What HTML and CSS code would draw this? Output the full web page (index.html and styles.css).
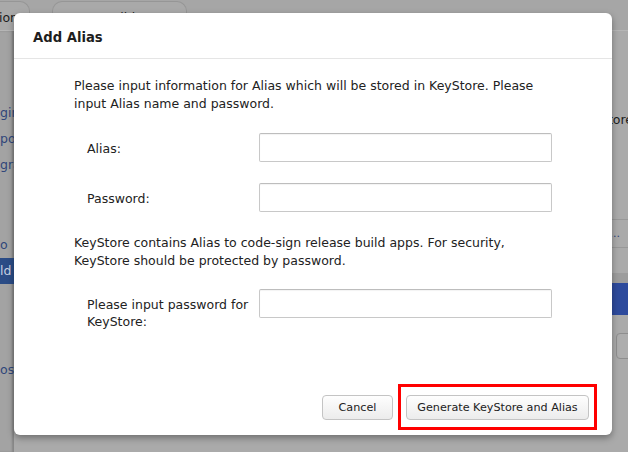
FILE: index.html
```html
<!DOCTYPE html>
<html>
<head>
<meta charset="utf-8">
<title>Add Alias</title>
<link rel="stylesheet" href="styles.css">
</head>
<body>
<div class="app">
  <div class="tabbar">
    <div class="tab tab-first">Configuration</div>
    <div class="tab tab-build">Build</div>
  </div>
  <div class="workspace">
    <nav class="sidebar">
      <div class="side-item first">gin</div>
      <div class="side-item">pos</div>
      <div class="side-item">gra</div>
      <div class="side-item gap1">o</div>
      <div class="side-item selected">ld</div>
      <div class="side-item gap2">os</div>
    </nav>
    <main class="content">
      <div class="content-title">KeyStore</div>
      <div class="content-row"><span class="dots">...</span></div>
      <div class="band-gray"></div>
      <div class="band-blue"></div>
      <div class="ghost-btn"></div>
    </main>
  </div>
</div>

<div class="modal">
  <div class="modal-header">Add Alias</div>
  <div class="modal-body">
    <p class="desc">Please input information for Alias which will be stored in KeyStore. Please input Alias name and password.</p>
    <div class="form-row">
      <label class="form-label">Alias:</label>
      <input class="form-input" type="text">
    </div>
    <div class="form-row">
      <label class="form-label">Password:</label>
      <input class="form-input" type="password">
    </div>
    <p class="desc desc-second">KeyStore contains Alias to code-sign release build apps. For security, KeyStore should be protected by password.</p>
    <div class="form-row">
      <label class="form-label">Please input password for KeyStore:</label>
      <input class="form-input" type="password">
    </div>
  </div>
  <div class="modal-footer">
    <button class="btn btn-cancel">Cancel</button>
    <span class="highlight-wrap">
      <button class="btn btn-primary">Generate KeyStore and Alias</button>
      <span class="highlight-box"></span>
    </span>
  </div>
</div>
</body>
</html>
```
FILE: styles.css
```css
html, body {
  margin: 0;
  padding: 0;
}
body {
  width: 628px;
  height: 452px;
  overflow: hidden;
  background: #a9a9a9;
  font-family: "DejaVu Sans", sans-serif;
  font-size: 12.5px;
  line-height: 17px;
  color: #222;
  position: relative;
}

/* ---------- dimmed background app ---------- */
.app {
  height: 452px;
  display: flex;
  flex-direction: column;
}
.tabbar {
  height: 30px;
  display: flex;
  align-items: flex-end;
  background: #a6a6a6;
  border-bottom: 1px solid #b6b6b6;
}
.tab {
  height: 29px;
  box-sizing: border-box;
  border: 1px solid #969696;
  border-bottom: none;
  border-radius: 10px 10px 0 0;
  background: #a9a9a9;
  color: #1c1c1c;
  padding-top: 7px;
  white-space: nowrap;
  overflow: hidden;
}
.tab-first {
  width: 130px;
  margin-left: -100px;
  text-align: right;
  padding-right: 11px;
}
.tab-build {
  width: 135px;
  margin-left: 22px;
  text-align: center;
}
.workspace {
  flex: 1;
  display: flex;
  background: #aaaaaa;
}
.sidebar {
  width: 14px;
  flex: none;
  overflow: hidden;
  background: #a3a3a3;
  box-shadow: inset -2px 0 2px rgba(0,0,0,0.18);
  padding-top: 69px;
  box-sizing: border-box;
}
.side-item {
  height: 26px;
  line-height: 26px;
  white-space: nowrap;
  color: #30467a;
}
.side-item.gap1 { margin-top: 54px; }
.side-item.gap2 { margin-top: 73px; }
.side-item.selected {
  background: #2b4c86;
  color: #c9d2e2;
}
.content {
  flex: 1;
  display: flex;
  flex-direction: column;
  padding-top: 80px;
  overflow: hidden;
}
.content-title {
  height: 17px;
  text-align: right;
  margin-right: -5px;
  white-space: nowrap;
  color: #1c1c1c;
}
.content-row {
  margin-top: 91px;
  height: 29px;
  box-sizing: border-box;
  border-top: 1px solid #989898;
  border-bottom: 1px solid #989898;
  display: flex;
  align-items: center;
  justify-content: flex-end;
  padding-right: 8px;
}
.dots {
  color: #30467a;
  font-size: 11px;
}
.band-gray {
  margin-top: 25px;
  height: 10px;
  background: #9c9c9c;
}
.band-blue {
  height: 32px;
  background: #2d4a9c;
}
.ghost-btn {
  margin-top: 18px;
  align-self: flex-end;
  margin-right: -20px;
  width: 30px;
  height: 24px;
  border: 1px solid #8e8e8e;
  border-radius: 4px;
  background: #adadad;
}

/* ---------- modal ---------- */
.modal {
  position: absolute;
  left: 14px;
  top: 13px;
  width: 598px;
  height: 422px;
  background: #fff;
  border-radius: 6px;
  box-shadow: 0 3px 7px rgba(0,0,0,0.35);
  display: flex;
  flex-direction: column;
}
.modal-header {
  height: 46px;
  box-sizing: border-box;
  padding: 16px 0 0 19px;
  border-bottom: 1px solid #e5e5e5;
  font-weight: bold;
  font-size: 13.2px;
  color: #1e1e1e;
}
.modal-body {
  padding: 18px 60px 0 60px;
}
.desc {
  margin: 0 0 20px;
  line-height: 18px;
}
.desc-second {
  margin: 22px 0 19px;
}
.form-row {
  display: flex;
  align-items: flex-start;
}
.form-row + .form-row {
  margin-top: 21px;
}
.form-label {
  width: 185px;
  flex: none;
  box-sizing: border-box;
  padding: 7px 0 0 13px;
}
.form-input {
  flex: 1;
  height: 29px;
  box-sizing: border-box;
  margin: 0;
  border: 1px solid #c8c8c8;
  border-top-color: #bdbdbd;
  border-radius: 2px;
  background: #fff;
  box-shadow: inset 0 1px 1px rgba(0,0,0,0.05);
  font: inherit;
  padding: 0 6px;
}
.modal-footer {
  margin-top: auto;
  display: flex;
  justify-content: flex-end;
  gap: 13px;
  padding: 0 23px 15px 0;
}
.btn {
  height: 25px;
  box-sizing: border-box;
  margin: 0;
  border: 1px solid #c4c4c4;
  border-radius: 4px;
  background: linear-gradient(#fefefe, #ececec);
  font-family: "DejaVu Sans", sans-serif;
  font-size: 11.2px;
  color: #222;
  line-height: 23px;
  display: block;
}
.btn-cancel {
  width: 71px;
  padding: 0;
}
.btn-primary {
  width: 183px;
  padding: 0;
}
.highlight-wrap {
  position: relative;
  display: block;
}
.highlight-box {
  position: absolute;
  left: -8px;
  right: -8px;
  top: -11px;
  bottom: -10px;
  border: 3px solid #ff0000;
  pointer-events: none;
}
```
